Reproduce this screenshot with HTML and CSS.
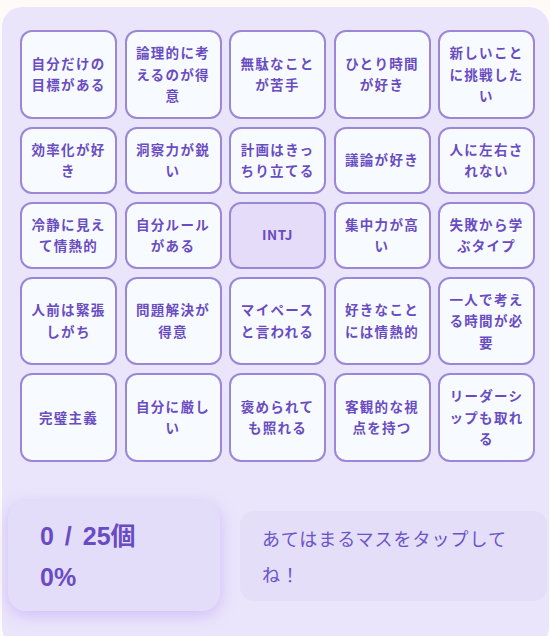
FILE: index.html
```html
<!DOCTYPE html>
<html lang="ja">
<head>
<meta charset="utf-8">
<title>INTJ ビンゴ</title>
<link rel="stylesheet" href="styles.css">
</head>
<body>
<div class="board">
  <div class="grid">
    <div class="cell">自分だけの目標がある</div>
    <div class="cell">論理的に考えるのが得意</div>
    <div class="cell">無駄なことが苦手</div>
    <div class="cell">ひとり時間が好き</div>
    <div class="cell">新しいことに挑戦したい</div>
    <div class="cell">効率化が好き</div>
    <div class="cell">洞察力が鋭い</div>
    <div class="cell">計画はきっちり立てる</div>
    <div class="cell">議論が好き</div>
    <div class="cell">人に左右されない</div>
    <div class="cell">冷静に見えて情熱的</div>
    <div class="cell">自分ルールがある</div>
    <div class="cell center">INTJ</div>
    <div class="cell">集中力が高い</div>
    <div class="cell">失敗から学ぶタイプ</div>
    <div class="cell">人前は緊張しがち</div>
    <div class="cell">問題解決が得意</div>
    <div class="cell">マイペースと言われる</div>
    <div class="cell">好きなことには情熱的</div>
    <div class="cell">一人で考える時間が必要</div>
    <div class="cell">完璧主義</div>
    <div class="cell">自分に厳しい</div>
    <div class="cell">褒められても照れる</div>
    <div class="cell">客観的な視点を持つ</div>
    <div class="cell">リーダーシップも取れる</div>
  </div>
  <div class="status">
    <div class="score">
      <div class="count">0 / 25個</div>
      <div class="percent">0%</div>
    </div>
    <div class="hint">あてはまるマスをタップしてね！</div>
  </div>
</div>
</body>
</html>
```

FILE: styles.css
```css
html, body {
  margin: 0;
  padding: 0;
}
body {
  background: #fdfaf8;
  font-family: "Noto Sans CJK JP", "Noto Sans", sans-serif;
  width: 550px;
  height: 636px;
  overflow: hidden;
}
.board {
  margin: 7px 1px 0 2px;
  height: 640px;
  box-sizing: border-box;
  background: #ebe5fb;
  border-radius: 20px;
  padding: 23px 0 0 6px;
}
.grid {
  margin-left: 12px;
  display: grid;
  grid-template-columns: repeat(5, 97px);
  column-gap: 7.5px;
  row-gap: 8px;
}
.cell {
  box-sizing: border-box;
  background: #f7fbff;
  border: 2px solid #9b87d6;
  border-radius: 12px;
  padding: 10px 6px;
  display: flex;
  align-items: center;
  justify-content: center;
  text-align: center;
  color: #6a4cc2;
  font-size: 13.5px;
  font-weight: 700;
  line-height: 21.5px;
  letter-spacing: 1.3px;
}
.cell.center {
  background: #e4dcf9;
  letter-spacing: 0.5px;
}
.status {
  margin-top: 39px;
  display: flex;
  align-items: center;
  gap: 20px;
}
.score {
  flex: 0 0 212px;
  height: 110px;
  box-sizing: border-box;
  background: #e3ddf9;
  border-radius: 18px;
  box-shadow: 0 4px 16px rgba(170, 140, 245, 0.45);
  padding: 15px 32px;
  color: #6a4bc4;
  font-family: "Liberation Sans", "Noto Sans CJK JP", sans-serif;
  font-weight: 700;
  font-size: 25px;
  line-height: 41px;
}
.count {
  word-spacing: 4px;
}
.hint {
  flex: 0 0 307px;
  height: 90px;
  box-sizing: border-box;
  background: #e4def8;
  border-radius: 14px;
  padding: 9px 22px;
  color: #6b54c8;
  font-size: 18px;
  line-height: 36px;
  letter-spacing: 1px;
}
```
